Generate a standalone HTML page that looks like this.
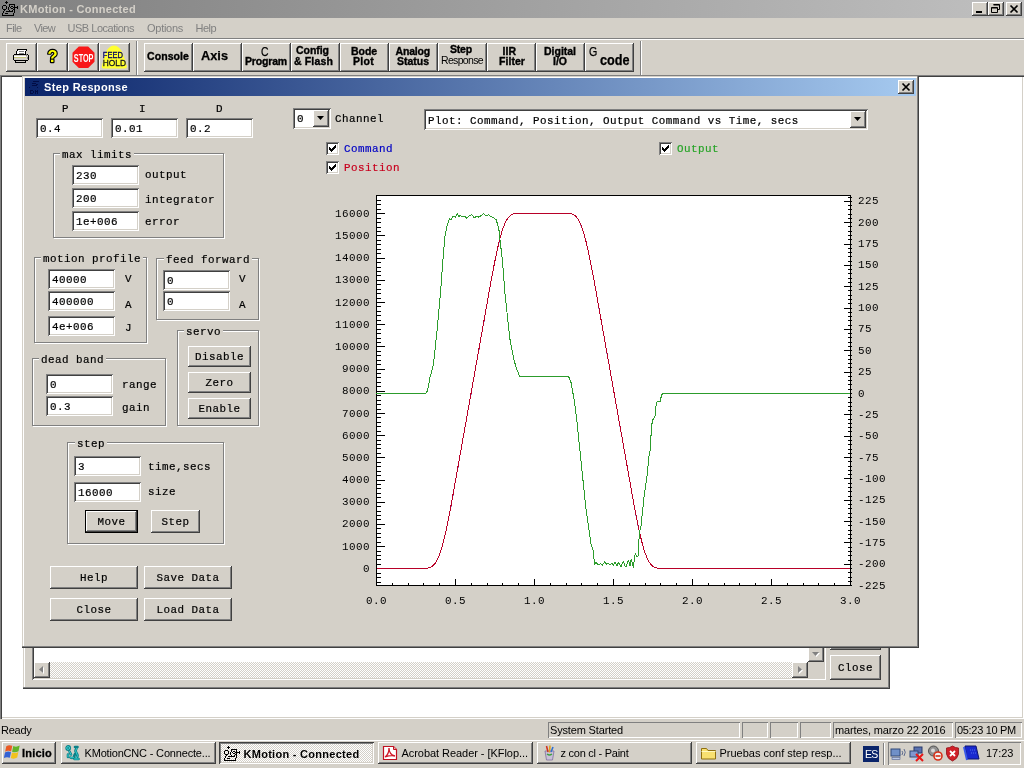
<!DOCTYPE html>
<html><head><meta charset="utf-8"><title>KMotion - Connected</title>
<style>
*{box-sizing:border-box;margin:0;padding:0}
html,body{width:1024px;height:768px;overflow:hidden;background:#d4d0c8}
body{position:relative;font-family:"Liberation Sans",sans-serif;font-size:11px;color:#000}
#r{position:absolute;left:0;top:0;width:1024px;height:768px;overflow:hidden;will-change:transform}
.a{position:absolute}
.m{font-family:"Liberation Mono",monospace;font-size:10.9px;letter-spacing:0.46px;line-height:14px;white-space:pre;color:#000;-webkit-text-stroke:0.2px currentColor}
.s{font-family:"Liberation Sans",sans-serif;font-size:11px;line-height:14px;white-space:pre}
.b{font-weight:bold}
.rb{background:#d4d0c8;box-shadow:inset -1px -1px #404040,inset 1px 1px #fff,inset -2px -2px #808080,inset 2px 2px #d4d0c8}
.sk{background:#fff;box-shadow:inset 1px 1px #808080,inset -1px -1px #fff,inset 2px 2px #404040,inset -2px -2px #d4d0c8}
.gb{border:1px solid #808080;box-shadow:1px 1px #fff,inset 1px 1px #fff}
.gl{background:#d4d0c8;padding:0 2px}
.btn{text-align:center}
.tb{background:#d4d0c8;box-shadow:inset -1px -1px #404040,inset 1px 1px #fff,inset -2px -2px #808080}
.tbt{font-family:"Liberation Sans",sans-serif;font-weight:bold;font-size:11px;line-height:11px;text-align:center;white-space:pre}
.st{box-shadow:inset 1px 1px #808080,inset -1px -1px #fff}
.tk{background:#d4d0c8;box-shadow:inset -1px -1px #404040,inset 1px 1px #fff,inset -2px -2px #808080,inset 2px 2px #d4d0c8}
</style></head>
<body>
<div id="r">
<div class="a " style="left:0px;top:0px;width:1024px;height:18px;background:linear-gradient(90deg,#808080,#c0c0c0)"></div>
<div class="a s" style="left:20px;top:2.2px;font-size:11px;color:#d4d0c8;font-weight:bold;letter-spacing:0.28px;">KMotion - Connected</div>
<svg class="a" style="left:2px;top:1px" width="16" height="16" viewBox="0 0 16 16" shape-rendering="crispEdges"><path d="M4 0h1v1h-1zM3 1h3v1h-3zM4 2h1v1h-1zM7 3h6v1h-6zM1 4h3v1h-3zM7 4h1v1h-1zM12 4h1v1h-1zM0 5h1v1h-1zM4 5h1v1h-1zM7 5h1v1h-1zM9 5h2v1h-2zM12 5h1v1h-1zM15 5h1v1h-1zM0 6h1v1h-1zM4 6h1v1h-1zM6 6h1v1h-1zM8 6h1v1h-1zM11 6h5v1h-5zM0 7h1v1h-1zM4 7h1v1h-1zM6 7h1v1h-1zM9 7h2v1h-2zM12 7h1v1h-1zM15 7h1v1h-1zM1 8h3v1h-3zM6 8h1v1h-1zM11 8h2v1h-2zM2 9h1v1h-1zM7 9h1v1h-1zM10 9h1v1h-1zM12 9h1v1h-1zM1 10h1v1h-1zM4 10h7v1h-7zM12 10h1v1h-1zM1 11h1v1h-1zM12 11h1v1h-1zM0 12h1v1h-1zM3 12h3v1h-3zM11 12h1v1h-1zM0 13h1v1h-1zM11 13h1v1h-1zM0 14h12v1h-12z" fill="#000"/></svg>
<div class="a rb" style="left:972px;top:2px;width:16px;height:14px;"></div>
<div class="a " style="left:976px;top:11px;width:6px;height:2px;background:#000"></div>
<div class="a rb" style="left:988px;top:2px;width:16px;height:14px;"></div>
<svg class="a" style="left:988px;top:2px" width="16" height="14" viewBox="0 0 16 14"><path d="M5.5 2.5h6v5h-2M5.5 3h6M3.5 5.5h6v5h-6zM3.5 6h6" fill="none" stroke="#000" stroke-width="1"/></svg>
<div class="a rb" style="left:1006px;top:2px;width:16px;height:14px;"></div>
<svg class="a" style="left:1006px;top:2px" width="16" height="14" viewBox="0 0 16 14"><path d="M4.5 3.5l7 7M11.5 3.5l-7 7" fill="none" stroke="#000" stroke-width="1.7"/></svg>
<div class="a s" style="left:6px;top:21.2px;font-size:11px;color:#808080;letter-spacing:-0.56px;">File</div>
<div class="a s" style="left:34px;top:21.2px;font-size:11px;color:#808080;letter-spacing:-0.66px;">View</div>
<div class="a s" style="left:67.5px;top:21.2px;font-size:11px;color:#808080;letter-spacing:-0.48px;">USB Locations</div>
<div class="a s" style="left:147px;top:21.2px;font-size:11px;color:#808080;letter-spacing:-0.27px;">Options</div>
<div class="a s" style="left:195.5px;top:21.2px;font-size:11px;color:#808080;letter-spacing:-0.53px;">Help</div>
<div class="a " style="left:0px;top:38px;width:1024px;height:1px;background:#808080"></div>
<div class="a " style="left:0px;top:39px;width:1024px;height:1px;background:#fff"></div>
<div class="a tb" style="left:6px;top:43px;width:31px;height:29px;"></div>
<div class="a tb" style="left:37px;top:43px;width:31px;height:29px;"></div>
<div class="a tb" style="left:68px;top:43px;width:31px;height:29px;"></div>
<div class="a tb" style="left:99px;top:43px;width:31px;height:29px;"></div>
<div class="a " style="left:136px;top:41px;width:1px;height:34px;background:#808080"></div>
<div class="a " style="left:137px;top:41px;width:1px;height:34px;background:#fff"></div>
<div class="a tb" style="left:144px;top:43px;width:49px;height:29px;"></div>
<div class="a tb" style="left:193px;top:43px;width:49px;height:29px;"></div>
<div class="a tb" style="left:242px;top:43px;width:49px;height:29px;"></div>
<div class="a tb" style="left:291px;top:43px;width:49px;height:29px;"></div>
<div class="a tb" style="left:340px;top:43px;width:49px;height:29px;"></div>
<div class="a tb" style="left:389px;top:43px;width:49px;height:29px;"></div>
<div class="a tb" style="left:438px;top:43px;width:49px;height:29px;"></div>
<div class="a tb" style="left:487px;top:43px;width:49px;height:29px;"></div>
<div class="a tb" style="left:536px;top:43px;width:49px;height:29px;"></div>
<div class="a tb" style="left:585px;top:43px;width:49px;height:29px;"></div>
<div class="a " style="left:640px;top:41px;width:1px;height:34px;background:#808080"></div>
<div class="a " style="left:641px;top:41px;width:1px;height:34px;background:#fff"></div>
<div class="a s" style="left:147px;top:49.4px;font-size:10.5px;color:#000;font-weight:bold;letter-spacing:0.08px;-webkit-text-stroke:0.35px #000;">Console</div>
<div class="a s" style="left:201px;top:48.8px;font-size:13.5px;color:#000;font-weight:bold;transform:scaleX(0.947);transform-origin:0 0;-webkit-text-stroke:0.25px #000;">Axis</div>
<div class="a s" style="left:260.5px;top:45.1px;font-size:13.5px;color:#000;transform:scaleX(0.769);transform-origin:0 0;-webkit-text-stroke:0.25px #000;">C</div>
<div class="a s" style="left:245px;top:53.9px;font-size:10.5px;color:#000;font-weight:bold;letter-spacing:-0.17px;-webkit-text-stroke:0.35px #000;">Program</div>
<div class="a s" style="left:296px;top:43.4px;font-size:10.5px;color:#000;font-weight:bold;letter-spacing:-0.04px;-webkit-text-stroke:0.35px #000;">Config</div>
<div class="a s" style="left:294px;top:53.9px;font-size:10.5px;color:#000;font-weight:bold;letter-spacing:0.15px;-webkit-text-stroke:0.35px #000;">&amp; Flash</div>
<div class="a s" style="left:351px;top:43.9px;font-size:10.5px;color:#000;font-weight:bold;letter-spacing:-0.06px;-webkit-text-stroke:0.35px #000;">Bode</div>
<div class="a s" style="left:353px;top:53.9px;font-size:10.5px;color:#000;font-weight:bold;letter-spacing:0.29px;-webkit-text-stroke:0.35px #000;">Plot</div>
<div class="a s" style="left:395.5px;top:43.9px;font-size:10.5px;color:#000;font-weight:bold;letter-spacing:-0.18px;-webkit-text-stroke:0.35px #000;">Analog</div>
<div class="a s" style="left:397px;top:53.9px;font-size:10.5px;color:#000;font-weight:bold;letter-spacing:-0.02px;-webkit-text-stroke:0.35px #000;">Status</div>
<div class="a s" style="left:450px;top:41.9px;font-size:10.5px;color:#000;font-weight:bold;letter-spacing:-0.19px;-webkit-text-stroke:0.35px #000;">Step</div>
<div class="a s" style="left:441px;top:53.4px;font-size:10.5px;color:#000;letter-spacing:-0.66px;">Response</div>
<div class="a s" style="left:502.5px;top:43.9px;font-size:10.5px;color:#000;font-weight:bold;letter-spacing:0.03px;-webkit-text-stroke:0.35px #000;">IIR</div>
<div class="a s" style="left:499px;top:53.9px;font-size:10.5px;color:#000;font-weight:bold;letter-spacing:0.05px;-webkit-text-stroke:0.35px #000;">Filter</div>
<div class="a s" style="left:544px;top:43.9px;font-size:10.5px;color:#000;font-weight:bold;letter-spacing:-0.01px;-webkit-text-stroke:0.35px #000;">Digital</div>
<div class="a s" style="left:553px;top:53.9px;font-size:10.5px;color:#000;font-weight:bold;letter-spacing:-0.00px;-webkit-text-stroke:0.35px #000;">I/O</div>
<div class="a s" style="left:589px;top:45.0px;font-size:13px;color:#000;transform:scaleX(0.821);transform-origin:0 0;-webkit-text-stroke:0.25px #000;">G</div>
<div class="a s" style="left:600px;top:52.6px;font-size:14px;color:#000;font-weight:bold;transform:scaleX(0.903);transform-origin:0 0;-webkit-text-stroke:0.25px #000;">code</div>
<svg class="a" style="left:13px;top:49px" width="17" height="14" viewBox="0 0 17 14" shape-rendering="crispEdges"><path d="M4.5 0.5h9l-1.5 5h-9z" fill="#fff" stroke="#000"/><path d="M6 2.5h5M5.5 4h5" stroke="#808080" fill="none"/><path d="M1.5 5.5h13l1 1.5v3.5l-1 1h-13l-1-1v-3.5z" fill="#d4d0c8" stroke="#000"/><path d="M1 8.5h12" stroke="#c8c880" fill="none"/><path d="M1 7.5h12" stroke="#fff" fill="none"/><path d="M2.5 11.5h10v2h-10z" fill="#d4d0c8" stroke="#000"/><path d="M13 5v2M14.5 8v2" stroke="#808080" fill="none"/></svg>
<svg class="a" style="left:44px;top:45px" width="18" height="22" viewBox="0 0 18 22"><text x="8.5" y="17" text-anchor="middle" font-family="Liberation Sans, sans-serif" font-weight="bold" font-size="16.5" fill="#ffff00" stroke="#000" stroke-width="2.4" paint-order="stroke" stroke-linejoin="round">?</text></svg>
<svg class="a" style="left:72px;top:46px" width="23" height="23" viewBox="0 0 23 23"><path d="M6.8 0.5h9.4l6.3 6.3v8.9l-6.3 6.3h-9.4l-6.3-6.3v-8.9z" fill="#f81818"/><text x="1.8" y="16" textLength="19.6" lengthAdjust="spacingAndGlyphs" font-family="Liberation Sans, sans-serif" font-weight="bold" font-size="11" fill="#fff">STOP</text></svg>
<svg class="a" style="left:100px;top:44px" width="29" height="27" viewBox="0 0 29 27"><path d="M14 1.500C17.500 1.500 20.500 4.500 22 8L25 16L26.800 22.500Q27 24.500 25 24.500H3.500Q1.500 24.500 1.800 22.500L3.500 16L6 8C7.500 4.500 10.500 1.500 14 1.500Z" fill="#ffff30"/><text x="2.8" y="13.7" textLength="20.2" lengthAdjust="spacingAndGlyphs" font-family="Liberation Sans, sans-serif" font-size="9.4" fill="#000060" stroke="#000060" stroke-width="0.3">FEED</text><text x="2.8" y="21.9" textLength="23.2" lengthAdjust="spacingAndGlyphs" font-family="Liberation Sans, sans-serif" font-size="9.4" fill="#101020" stroke="#101020" stroke-width="0.3">HOLD</text></svg>
<div class="a " style="left:0px;top:75px;width:1024px;height:644px;background:#fff;box-shadow:inset 1px 1px #808080,inset 2px 2px #404040,inset -1px -1px #fff,inset -2px -2px #d4d0c8"></div>
<div class="a " style="left:23px;top:560px;width:867px;height:129px;background:#d4d0c8;box-shadow:inset -1px -1px #404040,inset -2px -2px #808080,inset 1px 1px #d4d0c8,inset 2px 2px #fff"></div>
<div class="a sk" style="left:32px;top:580px;width:794px;height:100px;"></div>
<div class="a " style="left:34px;top:662px;width:774px;height:16px;background-image:linear-gradient(45deg,#d4d0c8 25%,transparent 25%,transparent 75%,#d4d0c8 75%),linear-gradient(45deg,#d4d0c8 25%,transparent 25%,transparent 75%,#d4d0c8 75%);background-size:2px 2px;background-position:0 0,1px 1px;background-color:#fff"></div>
<div class="a " style="left:808px;top:600px;width:16px;height:62px;background-image:linear-gradient(45deg,#d4d0c8 25%,transparent 25%,transparent 75%,#d4d0c8 75%),linear-gradient(45deg,#d4d0c8 25%,transparent 25%,transparent 75%,#d4d0c8 75%);background-size:2px 2px;background-position:0 0,1px 1px;background-color:#fff"></div>
<div class="a " style="left:808px;top:662px;width:16px;height:16px;background:#d4d0c8"></div>
<div class="a rb" style="left:34px;top:662px;width:16px;height:16px;"></div>
<svg class="a" style="left:34px;top:662px" width="16" height="16"><path d="M9 4v7l-4-3.500z" fill="#fff" transform="translate(1,1)"/><path d="M9 4v7l-4-3.500z" fill="#808080"/></svg>
<div class="a rb" style="left:792px;top:662px;width:16px;height:16px;"></div>
<svg class="a" style="left:792px;top:662px" width="16" height="16"><path d="M6 4v7l4-3.500z" fill="#fff" transform="translate(1,1)"/><path d="M6 4v7l4-3.500z" fill="#808080"/></svg>
<div class="a rb" style="left:808px;top:646px;width:16px;height:16px;"></div>
<svg class="a" style="left:808px;top:646px" width="16" height="16"><path d="M4 6h7l-3.500 4z" fill="#fff" transform="translate(1,1)"/><path d="M4 6h7l-3.500 4z" fill="#808080"/></svg>
<div class="a rb" style="left:830px;top:626px;width:51px;height:24px;"></div>
<div class="a m btn" style="left:830px;top:632px;width:51px">Send</div>
<div class="a rb" style="left:830px;top:655px;width:51px;height:25px;"></div>
<div class="a m btn" style="left:830px;top:661px;width:51px">Close</div>
<div class="a " style="left:0px;top:719px;width:1024px;height:21px;background:#d4d0c8"></div>
<div class="a s" style="left:1px;top:723.2px;font-size:11px;color:#000;letter-spacing:-0.26px;">Ready</div>
<div class="a st" style="left:548px;top:722px;width:192px;height:16px;"></div>
<div class="a st" style="left:742px;top:722px;width:26px;height:16px;"></div>
<div class="a st" style="left:770px;top:722px;width:28px;height:16px;"></div>
<div class="a st" style="left:800px;top:722px;width:31px;height:16px;"></div>
<div class="a st" style="left:833px;top:722px;width:120px;height:16px;"></div>
<div class="a st" style="left:955px;top:722px;width:67px;height:16px;"></div>
<div class="a s" style="left:550px;top:723.2px;font-size:11px;color:#000;letter-spacing:-0.16px;">System Started</div>
<div class="a s" style="left:835px;top:723.2px;font-size:11px;color:#000;letter-spacing:-0.12px;">martes, marzo 22 2016</div>
<div class="a s" style="left:957px;top:723.2px;font-size:11px;color:#000;letter-spacing:-0.31px;">05:23 10 PM</div>
<div class="a " style="left:0px;top:740px;width:1024px;height:28px;background:#d4d0c8;border-top:1px solid #fff"></div>
<div class="a tk" style="left:2px;top:742px;width:54px;height:22px;"></div>
<div class="a s" style="left:22px;top:746.2px;font-size:11px;color:#000;font-weight:bold;letter-spacing:0.21px;-webkit-text-stroke:0.3px #000;">Inicio</div>
<svg class="a" style="left:4px;top:744px" width="17" height="16" viewBox="0 0 17 16"><path d="M2.300 2.200q2.800-1.800 6-0.400l-1.200 5.600q-3.200-1.400-6 0.400z" fill="#ea5a24"/><path d="M9.300 2.100q3.200 1.400 6.400-0.500l-1.200 5.600q-3.200 1.900-6.400 0.500z" fill="#62b428"/><path d="M1 8.600q2.800-1.800 6-0.400l-1.200 5.600q-3.200-1.400-6 0.400z" fill="#3462d4"/><path d="M8 8.500q3.200 1.400 6.400-0.500l-1.200 5.600q-3.200 1.900-6.400 0.500z" fill="#f2c21c"/></svg>
<div class="a tk" style="left:61px;top:742px;width:155px;height:22px;"></div>
<svg class="a" style="left:65px;top:745px" width="16" height="16" viewBox="0 0 16 16"><g fill="none" stroke="#0c8088" stroke-width="2.600" stroke-linecap="round"><circle cx="3.200" cy="3" r="1.600"/><path d="M4.500 6.500l1.500 3M3 9.500v2.500M5.500 12.500q1.500 1 3 0M10 2l2.500 0M11.500 3.500q-2 2.500 0 4.500q2 2.500 0 5M10 9l-1 2.500M9.500 14h4"/></g><g fill="none" stroke="#38d0d0" stroke-width="1" stroke-linecap="round"><circle cx="3.200" cy="3" r="1.500"/><path d="M4.500 6.500l1.500 3M3 9.500v2.500M5.500 12.500q1.500 1 3 0M11.500 3.500q-2 2.500 0 4.500q2 2.500 0 5M9.500 14h4"/></g></svg>
<div class="a s" style="left:84.5px;top:746.2px;font-size:11px;color:#000;letter-spacing:-0.18px;">KMotionCNC - Connecte...</div>
<div class="a " style="left:219px;top:742px;width:155px;height:22px;box-shadow:inset 1px 1px #404040,inset -1px -1px #fff,inset 2px 2px #808080,inset -2px -2px #d4d0c8;background-image:linear-gradient(45deg,#d4d0c8 25%,transparent 25%,transparent 75%,#d4d0c8 75%),linear-gradient(45deg,#d4d0c8 25%,transparent 25%,transparent 75%,#d4d0c8 75%);background-size:2px 2px;background-position:0 0,1px 1px;background-color:#fff"></div>
<svg class="a" style="left:224px;top:746px" width="16" height="16" viewBox="0 0 16 16" shape-rendering="crispEdges"><path d="M4 0h1v1h-1zM3 1h3v1h-3zM4 2h1v1h-1zM7 3h6v1h-6zM1 4h3v1h-3zM7 4h1v1h-1zM12 4h1v1h-1zM0 5h1v1h-1zM4 5h1v1h-1zM7 5h1v1h-1zM9 5h2v1h-2zM12 5h1v1h-1zM15 5h1v1h-1zM0 6h1v1h-1zM4 6h1v1h-1zM6 6h1v1h-1zM8 6h1v1h-1zM11 6h5v1h-5zM0 7h1v1h-1zM4 7h1v1h-1zM6 7h1v1h-1zM9 7h2v1h-2zM12 7h1v1h-1zM15 7h1v1h-1zM1 8h3v1h-3zM6 8h1v1h-1zM11 8h2v1h-2zM2 9h1v1h-1zM7 9h1v1h-1zM10 9h1v1h-1zM12 9h1v1h-1zM1 10h1v1h-1zM4 10h7v1h-7zM12 10h1v1h-1zM1 11h1v1h-1zM12 11h1v1h-1zM0 12h1v1h-1zM3 12h3v1h-3zM11 12h1v1h-1zM0 13h1v1h-1zM11 13h1v1h-1zM0 14h12v1h-12z" fill="#000"/></svg>
<div class="a s" style="left:243.5px;top:747.2px;font-size:11px;color:#000;font-weight:bold;letter-spacing:0.28px;">KMotion - Connected</div>
<div class="a tk" style="left:378px;top:742px;width:155px;height:22px;"></div>
<svg class="a" style="left:382px;top:745px" width="16" height="16" viewBox="0 0 16 16"><path d="M1.500 1.500h10l3 3v10h-13z" fill="#fff" stroke="#c01020" stroke-width="1.2"/><path d="M11.500 1.500v3h3" fill="#f0b0b0" stroke="#c01020"/><path d="M3 12c3-2 4-6 4-9c0 4 2 7 6 8c-4-1-7 0-10 1z" fill="none" stroke="#d01828" stroke-width="1.3"/></svg>
<div class="a s" style="left:401.5px;top:746.2px;font-size:11px;color:#000;letter-spacing:-0.05px;">Acrobat Reader - [KFlop...</div>
<div class="a tk" style="left:537px;top:742px;width:155px;height:22px;"></div>
<svg class="a" style="left:541px;top:745px" width="16" height="16" viewBox="0 0 16 16"><path d="M4 6h9l-1.500 9h-6z" fill="#c8c0d8" stroke="#8070a0" stroke-width="0.8"/><path d="M5.500 1l1.500 6" stroke="#d03020" stroke-width="1.600"/><path d="M9 0.500l-0.500 7" stroke="#e0a020" stroke-width="1.600"/><path d="M12 2l-2 5" stroke="#3070d0" stroke-width="1.600"/><path d="M6 9q2.500 2 5 0" stroke="#40a040" stroke-width="1.400" fill="none"/></svg>
<div class="a s" style="left:560.5px;top:746.2px;font-size:11px;color:#000;letter-spacing:-0.26px;">z con cl - Paint</div>
<div class="a tk" style="left:696px;top:742px;width:155px;height:22px;"></div>
<svg class="a" style="left:700px;top:745px" width="17" height="16" viewBox="0 0 17 16"><path d="M1.500 3.500h5l1.500 2h7.500v8.500h-14z" fill="#f8e070" stroke="#907010" stroke-width="1"/><path d="M1.500 6.500h14" stroke="#fff8c0" stroke-width="1"/></svg>
<div class="a s" style="left:719.5px;top:746.2px;font-size:11px;color:#000;letter-spacing:-0.01px;">Pruebas conf step resp...</div>
<div class="a " style="left:863px;top:746px;width:16px;height:16px;background:#0a246a"></div>
<div class="a s" style="left:865px;top:747.4px;font-size:10.5px;color:#fff;letter-spacing:-0.75px;">ES</div>
<div class="a " style="left:883px;top:743px;width:1px;height:22px;background:#808080"></div>
<div class="a " style="left:884px;top:743px;width:1px;height:22px;background:#fff"></div>
<div class="a st" style="left:888px;top:742px;width:133px;height:23px;"></div>
<div class="a s" style="left:986px;top:746.2px;font-size:11px;color:#000;letter-spacing:-0.01px;">17:23</div>
<svg class="a" style="left:890px;top:745px" width="92" height="17" viewBox="0 0 92 17"><rect x="1" y="4" width="9" height="7" fill="#7090c8" stroke="#304878" stroke-width="1"/><rect x="2" y="12.500" width="8" height="2" fill="#b8c8e8" stroke="#506090" stroke-width="0.600"/><path d="M12 6q1.500 1.500 0 4M14 4q2.500 3 0 7" fill="none" stroke="#506088" stroke-width="0.900"/><rect x="24" y="2" width="8" height="6" fill="#5870b0" stroke="#283868"/><rect x="20" y="6" width="8" height="6" fill="#8098d0" stroke="#304878"/><rect x="21" y="13" width="7" height="2" fill="#b8c8e8"/><path d="M26 9l7 7M33 9l-7 7" stroke="#e81818" stroke-width="2"/><circle cx="43.500" cy="6" r="5" fill="#909090" stroke="#505050"/><circle cx="43" cy="5.500" r="2" fill="#d8d8d8"/><circle cx="48" cy="11" r="4" fill="#f0f0f0" stroke="#d83018" stroke-width="1.600"/><path d="M45.500 11h5" stroke="#d83018" stroke-width="1.600"/><path d="M62.500 1q3 2 6 2v6q-1 5-6 7q-5-2-6-7v-6q3 0 6-2z" fill="#d02028" stroke="#901018" stroke-width="0.800"/><path d="M60 6l5 5M65 6l-5 5" stroke="#fff" stroke-width="1.800"/><path d="M75 1h11l3 13h-12z" fill="#1828d0" stroke="#0c1470"/><path d="M74 2l3 13" stroke="#3858e8" stroke-width="2"/><path d="M80 5h5M81 8h5" stroke="#6080f0" stroke-width="0.800" stroke-dasharray="1 1"/></svg>
<div class="a " style="left:22px;top:76px;width:897px;height:572px;background:#d4d0c8;box-shadow:inset -1px -1px #404040,inset -2px -2px #808080,inset 1px 1px #d4d0c8,inset 2px 2px #fff"></div>
<div class="a " style="left:25px;top:78px;width:891px;height:18px;background:linear-gradient(90deg,#0a246a,#a6caf0)"></div>
<div class="a s" style="left:44px;top:80.2px;font-size:11px;color:#fff;font-weight:bold;letter-spacing:0.35px;">Step Response</div>
<div class="a rb" style="left:898px;top:80px;width:16px;height:14px;"></div>
<svg class="a" style="left:898px;top:80px" width="16" height="14" viewBox="0 0 16 14"><path d="M4.5 3.5l7 7M11.5 3.5l-7 7" fill="none" stroke="#000" stroke-width="1.7"/></svg>
<svg class="a" style="left:27px;top:79px" width="16" height="16" viewBox="0 0 16 16" shape-rendering="crispEdges"><path d="M6 2h6v1h-6zM5 4h4v1h-4zM9 5h2v1h-2zM5 6h5v1h-5zM2 8h1v1h-1zM10 8h1v1h-1zM3 11h1v4h-1zM4 11h2v1h-2zM6 12h1v2h-1zM4 14h2v1h-2zM8 11h1v4h-1zM9 12h1v1h-1zM10 11h1v4h-1z" fill="#00093e" opacity="0.85"/></svg>
<div class="a m" style="left:62px;top:102px;">P</div>
<div class="a m" style="left:139px;top:102px;">I</div>
<div class="a m" style="left:216px;top:102px;">D</div>
<div class="a sk" style="left:36px;top:118px;width:67px;height:20px;"></div>
<div class="a m" style="left:40px;top:122px;">0.4</div>
<div class="a sk" style="left:111px;top:118px;width:67px;height:20px;"></div>
<div class="a m" style="left:115px;top:122px;">0.01</div>
<div class="a sk" style="left:186px;top:118px;width:67px;height:20px;"></div>
<div class="a m" style="left:190px;top:122px;">0.2</div>
<div class="a gb" style="left:53px;top:153px;width:171px;height:85px;"></div>
<div class="a m gl" style="left:60px;top:148px">max limits</div>
<div class="a sk" style="left:72px;top:165px;width:67px;height:20px;"></div>
<div class="a m" style="left:76px;top:169px;">230</div>
<div class="a sk" style="left:72px;top:188px;width:67px;height:20px;"></div>
<div class="a m" style="left:76px;top:192px;">200</div>
<div class="a sk" style="left:72px;top:211px;width:67px;height:20px;"></div>
<div class="a m" style="left:76px;top:215px;">1e+006</div>
<div class="a m" style="left:145px;top:168px;">output</div>
<div class="a m" style="left:145px;top:193px;">integrator</div>
<div class="a m" style="left:145px;top:215px;">error</div>
<div class="a gb" style="left:34px;top:257px;width:113px;height:86px;"></div>
<div class="a m gl" style="left:41px;top:252px">motion profile</div>
<div class="a sk" style="left:48px;top:269px;width:67px;height:20px;"></div>
<div class="a m" style="left:52px;top:273px;">40000</div>
<div class="a sk" style="left:48px;top:291px;width:67px;height:20px;"></div>
<div class="a m" style="left:52px;top:295px;">400000</div>
<div class="a sk" style="left:48px;top:316px;width:67px;height:20px;"></div>
<div class="a m" style="left:52px;top:320px;">4e+006</div>
<div class="a m" style="left:125px;top:272px;">V</div>
<div class="a m" style="left:125px;top:298px;">A</div>
<div class="a m" style="left:125px;top:321px;">J</div>
<div class="a gb" style="left:156px;top:258px;width:103px;height:62px;"></div>
<div class="a m gl" style="left:164px;top:253px">feed forward</div>
<div class="a sk" style="left:163px;top:270px;width:67px;height:20px;"></div>
<div class="a m" style="left:167px;top:274px;">0</div>
<div class="a sk" style="left:163px;top:291px;width:67px;height:20px;"></div>
<div class="a m" style="left:167px;top:295px;">0</div>
<div class="a m" style="left:239px;top:272px;">V</div>
<div class="a m" style="left:239px;top:298px;">A</div>
<div class="a gb" style="left:177px;top:330px;width:82px;height:96px;"></div>
<div class="a m gl" style="left:184px;top:325px">servo</div>
<div class="a rb" style="left:188px;top:346px;width:63px;height:21px;"></div>
<div class="a m btn" style="left:188px;top:350px;width:63px">Disable</div>
<div class="a rb" style="left:188px;top:372px;width:63px;height:21px;"></div>
<div class="a m btn" style="left:188px;top:376px;width:63px">Zero</div>
<div class="a rb" style="left:188px;top:398px;width:63px;height:21px;"></div>
<div class="a m btn" style="left:188px;top:402px;width:63px">Enable</div>
<div class="a gb" style="left:32px;top:358px;width:134px;height:68px;"></div>
<div class="a m gl" style="left:39px;top:353px">dead band</div>
<div class="a sk" style="left:46px;top:374px;width:67px;height:20px;"></div>
<div class="a m" style="left:50px;top:378px;">0</div>
<div class="a sk" style="left:46px;top:396px;width:67px;height:20px;"></div>
<div class="a m" style="left:50px;top:400px;">0.3</div>
<div class="a m" style="left:122px;top:378px;">range</div>
<div class="a m" style="left:122px;top:401px;">gain</div>
<div class="a gb" style="left:67px;top:442px;width:157px;height:102px;"></div>
<div class="a m gl" style="left:75px;top:437px">step</div>
<div class="a sk" style="left:74px;top:456px;width:67px;height:20px;"></div>
<div class="a m" style="left:78px;top:460px;">3</div>
<div class="a sk" style="left:74px;top:482px;width:67px;height:20px;"></div>
<div class="a m" style="left:78px;top:486px;">16000</div>
<div class="a m" style="left:148px;top:460px;">time,secs</div>
<div class="a m" style="left:148px;top:485px;">size</div>
<div class="a " style="left:85px;top:510px;width:53px;height:23px;background:#000"></div>
<div class="a rb" style="left:86px;top:511px;width:51px;height:21px;"></div>
<div class="a m btn" style="left:85px;top:515px;width:53px">Move</div>
<div class="a rb" style="left:151px;top:510px;width:49px;height:23px;"></div>
<div class="a m btn" style="left:151px;top:515px;width:49px">Step</div>
<div class="a rb" style="left:50px;top:566px;width:88px;height:23px;"></div>
<div class="a m btn" style="left:50px;top:571px;width:88px">Help</div>
<div class="a rb" style="left:144px;top:566px;width:88px;height:23px;"></div>
<div class="a m btn" style="left:144px;top:571px;width:88px">Save Data</div>
<div class="a rb" style="left:50px;top:598px;width:88px;height:23px;"></div>
<div class="a m btn" style="left:50px;top:603px;width:88px">Close</div>
<div class="a rb" style="left:144px;top:598px;width:88px;height:23px;"></div>
<div class="a m btn" style="left:144px;top:603px;width:88px">Load Data</div>
<div class="a sk" style="left:293px;top:108px;width:38px;height:21px;"></div>
<div class="a m" style="left:297px;top:112px;">0</div>
<div class="a rb" style="left:313px;top:110px;width:16px;height:17px;"></div>
<svg class="a" style="left:317px;top:116px" width="7" height="4"><path d="M0 0h7l-3.5 4z" fill="#000"/></svg>
<div class="a m" style="left:335px;top:112px;">Channel</div>
<div class="a sk" style="left:424px;top:109px;width:444px;height:21px;"></div>
<div class="a m" style="left:428px;top:114px;">Plot: Command, Position, Output Command vs Time, secs</div>
<div class="a rb" style="left:850px;top:111px;width:16px;height:17px;"></div>
<svg class="a" style="left:854px;top:117px" width="7" height="4"><path d="M0 0h7l-3.5 4z" fill="#000"/></svg>
<div class="a sk" style="left:326px;top:142px;width:13px;height:13px;"></div>
<svg class="a" style="left:329px;top:145px" width="7" height="7" shape-rendering="crispEdges"><path d="M6 0h1v1h-1zM5 1h2v1h-2zM0 2h1v1h-1zM4 2h3v1h-3zM0 3h2v1h-2zM3 3h3v1h-3zM0 4h5v1h-5zM1 5h3v1h-3zM2 6h1v1h-1z" fill="#000"/></svg>
<div class="a m" style="left:344px;top:142px;color:#0000c4">Command</div>
<div class="a sk" style="left:326px;top:161px;width:13px;height:13px;"></div>
<svg class="a" style="left:329px;top:164px" width="7" height="7" shape-rendering="crispEdges"><path d="M6 0h1v1h-1zM5 1h2v1h-2zM0 2h1v1h-1zM4 2h3v1h-3zM0 3h2v1h-2zM3 3h3v1h-3zM0 4h5v1h-5zM1 5h3v1h-3zM2 6h1v1h-1z" fill="#000"/></svg>
<div class="a m" style="left:344px;top:161px;color:#c8001e">Position</div>
<div class="a sk" style="left:659px;top:142px;width:13px;height:13px;"></div>
<svg class="a" style="left:662px;top:145px" width="7" height="7" shape-rendering="crispEdges"><path d="M6 0h1v1h-1zM5 1h2v1h-2zM0 2h1v1h-1zM4 2h3v1h-3zM0 3h2v1h-2zM3 3h3v1h-3zM0 4h5v1h-5zM1 5h3v1h-3zM2 6h1v1h-1z" fill="#000"/></svg>
<div class="a m" style="left:677px;top:142px;color:#28a428">Output</div>
<svg class="a" style="left:0;top:0" width="1024" height="768" viewBox="0 0 1024 768">
<rect x="376" y="195" width="475" height="391" fill="#fff"/>
<path d="M376 195.5H851M376 585.5H851M376.5 195V586M850.5 195V586M376 582.5h5M376 577.5h5M376 573.5h5M376 568.5h9M376 564.5h5M376 559.5h5M376 555.5h5M376 551.5h5M376 546.5h9M376 542.5h5M376 537.5h5M376 533.5h5M376 528.5h5M376 524.5h9M376 519.5h5M376 515.5h5M376 511.5h5M376 506.5h5M376 502.5h9M376 497.5h5M376 493.5h5M376 488.5h5M376 484.5h5M376 480.5h9M376 475.5h5M376 471.5h5M376 466.5h5M376 462.5h5M376 457.5h9M376 453.5h5M376 448.5h5M376 444.5h5M376 440.5h5M376 435.5h9M376 431.5h5M376 426.5h5M376 422.5h5M376 417.5h5M376 413.5h9M376 409.5h5M376 404.5h5M376 400.5h5M376 395.5h5M376 391.5h9M376 386.5h5M376 382.5h5M376 377.5h5M376 373.5h5M376 369.5h9M376 364.5h5M376 360.5h5M376 355.5h5M376 351.5h5M376 346.5h9M376 342.5h5M376 338.5h5M376 333.5h5M376 329.5h5M376 324.5h9M376 320.5h5M376 315.5h5M376 311.5h5M376 306.5h5M376 302.5h9M376 298.5h5M376 293.5h5M376 289.5h5M376 284.5h5M376 280.5h9M376 275.5h5M376 271.5h5M376 267.5h5M376 262.5h5M376 258.5h9M376 253.5h5M376 249.5h5M376 244.5h5M376 240.5h5M376 235.5h9M376 231.5h5M376 227.5h5M376 222.5h5M376 218.5h5M376 213.5h9M376 209.5h5M376 204.5h5M376 200.5h5M852 585.5h-8M852 581.5h-4M852 577.5h-4M852 572.5h-4M852 568.5h-4M852 564.5h-8M852 560.5h-4M852 555.5h-4M852 551.5h-4M852 547.5h-4M852 542.5h-8M852 538.5h-4M852 534.5h-4M852 530.5h-4M852 525.5h-4M852 521.5h-8M852 517.5h-4M852 513.5h-4M852 508.5h-4M852 504.5h-4M852 500.5h-8M852 496.5h-4M852 491.5h-4M852 487.5h-4M852 483.5h-4M852 478.5h-8M852 474.5h-4M852 470.5h-4M852 466.5h-4M852 461.5h-4M852 457.5h-8M852 453.5h-4M852 449.5h-4M852 444.5h-4M852 440.5h-4M852 436.5h-8M852 431.5h-4M852 427.5h-4M852 423.5h-4M852 419.5h-4M852 414.5h-8M852 410.5h-4M852 406.5h-4M852 402.5h-4M852 397.5h-4M852 393.5h-8M852 389.5h-4M852 384.5h-4M852 380.5h-4M852 376.5h-4M852 372.5h-8M852 367.5h-4M852 363.5h-4M852 359.5h-4M852 355.5h-4M852 350.5h-8M852 346.5h-4M852 342.5h-4M852 337.5h-4M852 333.5h-4M852 329.5h-8M852 325.5h-4M852 320.5h-4M852 316.5h-4M852 312.5h-4M852 308.5h-8M852 303.5h-4M852 299.5h-4M852 295.5h-4M852 290.5h-4M852 286.5h-8M852 282.5h-4M852 278.5h-4M852 273.5h-4M852 269.5h-4M852 265.5h-8M852 261.5h-4M852 256.5h-4M852 252.5h-4M852 248.5h-4M852 244.5h-8M852 239.5h-4M852 235.5h-4M852 231.5h-4M852 226.5h-4M852 222.5h-8M852 218.5h-4M852 214.5h-4M852 209.5h-4M852 205.5h-4M852 201.5h-8M852 197.5h-4M376.5 586v-7M392.5 586v-3M408.5 586v-3M423.5 586v-3M439.5 586v-3M455.5 586v-7M471.5 586v-3M487.5 586v-3M502.5 586v-3M518.5 586v-3M534.5 586v-7M550.5 586v-3M566.5 586v-3M581.5 586v-3M597.5 586v-3M613.5 586v-7M629.5 586v-3M645.5 586v-3M660.5 586v-3M676.5 586v-3M692.5 586v-7M708.5 586v-3M724.5 586v-3M739.5 586v-3M755.5 586v-3M771.5 586v-7M787.5 586v-3M803.5 586v-3M818.5 586v-3M834.5 586v-3M850.5 586v-7" fill="none" stroke="#000" stroke-width="1" shape-rendering="crispEdges"/>
<path d="M376.7 568.3 377.2 568.3 377.7 568.3 378.2 568.3 378.7 568.3 379.2 568.3 379.7 568.3 380.2 568.3 380.7 568.3 381.2 568.3 381.7 568.3 382.2 568.3 382.7 568.3 383.2 568.3 383.7 568.3 384.2 568.3 384.7 568.3 385.2 568.3 385.7 568.3 386.2 568.3 386.7 568.3 387.2 568.3 387.7 568.3 388.2 568.3 388.7 568.3 389.2 568.3 389.7 568.3 390.2 568.3 390.7 568.3 391.2 568.3 391.7 568.3 392.2 568.3 392.7 568.3 393.2 568.3 393.7 568.3 394.2 568.3 394.7 568.3 395.2 568.3 395.7 568.3 396.2 568.3 396.7 568.3 397.2 568.3 397.7 568.3 398.2 568.3 398.7 568.3 399.2 568.3 399.7 568.3 400.2 568.3 400.7 568.3 401.2 568.3 401.7 568.3 402.2 568.3 402.7 568.3 403.2 568.3 403.7 568.3 404.2 568.3 404.7 568.3 405.2 568.3 405.7 568.3 406.2 568.3 406.7 568.3 407.2 568.3 407.7 568.3 408.2 568.3 408.7 568.3 409.2 568.3 409.7 568.3 410.2 568.3 410.7 568.3 411.2 568.3 411.7 568.3 412.2 568.3 412.7 568.3 413.2 568.3 413.7 568.3 414.2 568.3 414.7 568.3 415.2 568.3 415.7 568.3 416.2 568.3 416.7 568.3 417.2 568.3 417.7 568.3 418.2 568.3 418.7 568.3 419.2 568.3 419.7 568.3 420.2 568.3 420.7 568.3 421.2 568.3 421.7 568.3 422.2 568.3 422.7 568.3 423.2 568.3 423.7 568.3 424.2 568.3 424.7 568.3 425.2 568.3 425.7 568.3 426.2 568.3 426.7 568.2 427.2 568.2 427.7 568.1 428.2 568.0 428.7 567.9 429.2 567.8 429.7 567.6 430.2 567.4 430.7 567.2 431.2 567.0 431.7 566.7 432.2 566.3 432.7 565.9 433.2 565.5 433.7 565.0 434.2 564.4 434.7 563.8 435.2 563.2 435.7 562.4 436.2 561.7 436.7 560.8 437.2 559.9 437.7 558.9 438.2 557.8 438.7 556.6 439.2 555.4 439.7 554.1 440.2 552.6 440.7 551.1 441.2 549.6 441.7 547.9 442.2 546.1 442.7 544.3 443.2 542.4 443.7 540.5 444.2 538.4 444.7 536.3 445.2 534.2 445.7 532.0 446.2 529.7 446.7 527.4 447.2 525.0 447.7 522.6 448.2 520.1 448.7 517.6 449.2 515.0 449.7 512.4 450.2 509.8 450.7 507.2 451.2 504.5 451.7 501.8 452.2 499.0 452.7 496.3 453.2 493.5 453.7 490.7 454.2 488.0 454.7 485.2 455.2 482.4 455.7 479.5 456.2 476.7 456.7 473.9 457.2 471.1 457.7 468.3 458.2 465.5 458.7 462.7 459.2 459.9 459.7 457.1 460.2 454.3 460.7 451.5 461.2 448.7 461.7 445.8 462.2 443.0 462.7 440.2 463.2 437.4 463.7 434.6 464.2 431.8 464.7 429.0 465.2 426.2 465.7 423.4 466.2 420.6 466.7 417.8 467.2 415.0 467.7 412.1 468.2 409.3 468.7 406.5 469.2 403.7 469.7 400.9 470.2 398.1 470.7 395.3 471.2 392.5 471.7 389.7 472.2 386.9 472.7 384.1 473.2 381.3 473.7 378.4 474.2 375.6 474.7 372.8 475.2 370.0 475.7 367.2 476.2 364.4 476.7 361.6 477.2 358.8 477.7 356.0 478.2 353.2 478.7 350.4 479.2 347.5 479.7 344.7 480.2 341.9 480.7 339.1 481.2 336.3 481.7 333.5 482.2 330.7 482.7 327.9 483.2 325.1 483.7 322.3 484.2 319.5 484.7 316.7 485.2 313.8 485.7 311.0 486.2 308.2 486.7 305.4 487.2 302.6 487.7 299.8 488.2 297.0 488.7 294.2 489.2 291.4 489.7 288.6 490.2 285.9 490.7 283.1 491.2 280.4 491.7 277.7 492.2 275.0 492.7 272.3 493.2 269.7 493.7 267.1 494.2 264.5 494.7 262.0 495.2 259.5 495.7 257.1 496.2 254.7 496.7 252.4 497.2 250.1 497.7 247.9 498.2 245.7 498.7 243.6 499.2 241.5 499.7 239.6 500.2 237.6 500.7 235.8 501.2 234.1 501.7 232.4 502.2 230.8 502.7 229.3 503.2 227.8 503.7 226.5 504.2 225.2 504.7 224.0 505.2 222.9 505.7 221.9 506.2 221.0 506.7 220.1 507.2 219.3 507.7 218.6 508.2 217.9 508.7 217.3 509.2 216.7 509.7 216.2 510.2 215.8 510.7 215.4 511.2 215.0 511.7 214.7 512.2 214.4 512.7 214.2 513.2 214.0 513.7 213.8 514.2 213.7 514.7 213.6 515.2 213.5 515.7 213.4 516.2 213.4 516.7 213.3 517.2 213.3 517.7 213.3 518.2 213.3 518.7 213.3 519.2 213.3 519.7 213.3 520.2 213.3 520.7 213.3 521.2 213.3 521.7 213.3 522.2 213.3 522.7 213.3 523.2 213.3 523.7 213.3 524.2 213.3 524.7 213.3 525.2 213.3 525.7 213.3 526.2 213.3 526.7 213.3 527.2 213.3 527.7 213.3 528.2 213.3 528.7 213.3 529.2 213.3 529.7 213.3 530.2 213.3 530.7 213.3 531.2 213.3 531.7 213.3 532.2 213.3 532.7 213.3 533.2 213.3 533.7 213.3 534.2 213.3 534.7 213.3 535.2 213.3 535.7 213.3 536.2 213.3 536.7 213.3 537.2 213.3 537.7 213.3 538.2 213.3 538.7 213.3 539.2 213.3 539.7 213.3 540.2 213.3 540.7 213.3 541.2 213.3 541.7 213.3 542.2 213.3 542.7 213.3 543.2 213.3 543.7 213.3 544.2 213.3 544.7 213.3 545.2 213.3 545.7 213.3 546.2 213.3 546.7 213.3 547.2 213.3 547.7 213.3 548.2 213.3 548.7 213.3 549.2 213.3 549.7 213.3 550.2 213.3 550.7 213.3 551.2 213.3 551.7 213.3 552.2 213.3 552.7 213.3 553.2 213.3 553.7 213.3 554.2 213.3 554.7 213.3 555.2 213.3 555.7 213.3 556.2 213.3 556.7 213.3 557.2 213.3 557.7 213.3 558.2 213.3 558.7 213.3 559.2 213.3 559.7 213.3 560.2 213.3 560.7 213.3 561.2 213.3 561.7 213.3 562.2 213.3 562.7 213.3 563.2 213.3 563.7 213.3 564.2 213.3 564.7 213.3 565.2 213.3 565.7 213.3 566.2 213.3 566.7 213.3 567.2 213.3 567.7 213.3 568.2 213.3 568.7 213.4 569.2 213.4 569.7 213.4 570.2 213.5 570.7 213.6 571.2 213.7 571.7 213.9 572.2 214.1 572.7 214.3 573.2 214.5 573.7 214.8 574.2 215.1 574.7 215.5 575.2 215.9 575.7 216.4 576.2 216.9 576.7 217.5 577.2 218.2 577.7 218.9 578.2 219.6 578.7 220.5 579.2 221.4 579.7 222.3 580.2 223.4 580.7 224.5 581.2 225.7 581.7 227.0 582.2 228.4 582.7 229.8 583.2 231.4 583.7 233.0 584.2 234.7 584.7 236.5 585.2 238.4 585.7 240.3 586.2 242.3 586.7 244.4 587.2 246.5 587.7 248.7 588.2 251.0 588.7 253.3 589.2 255.7 589.7 258.1 590.2 260.5 590.7 263.0 591.2 265.6 591.7 268.1 592.2 270.7 592.7 273.4 593.2 276.0 593.7 278.7 594.2 281.5 594.7 284.2 595.2 287.0 595.7 289.7 596.2 292.5 596.7 295.3 597.2 298.1 597.7 300.9 598.2 303.7 598.7 306.5 599.2 309.4 599.7 312.2 600.2 315.0 600.7 317.8 601.2 320.6 601.7 323.4 602.2 326.2 602.7 329.0 603.2 331.8 603.7 334.6 604.2 337.4 604.7 340.2 605.2 343.1 605.7 345.9 606.2 348.7 606.7 351.5 607.2 354.3 607.7 357.1 608.2 359.9 608.7 362.7 609.2 365.5 609.7 368.3 610.2 371.1 610.7 373.9 611.2 376.8 611.7 379.6 612.2 382.4 612.7 385.2 613.2 388.0 613.7 390.8 614.2 393.6 614.7 396.4 615.2 399.2 615.7 402.0 616.2 404.8 616.7 407.7 617.2 410.5 617.7 413.3 618.2 416.1 618.7 418.9 619.2 421.7 619.7 424.5 620.2 427.3 620.7 430.1 621.2 432.9 621.7 435.7 622.2 438.5 622.7 441.4 623.2 444.2 623.7 447.0 624.2 449.8 624.7 452.6 625.2 455.4 625.7 458.2 626.2 461.0 626.7 463.8 627.2 466.6 627.7 469.4 628.2 472.2 628.7 475.1 629.2 477.9 629.7 480.7 630.2 483.5 630.7 486.3 631.2 489.1 631.7 491.9 632.2 494.6 632.7 497.4 633.2 500.1 633.7 502.9 634.2 505.6 634.7 508.2 635.2 510.9 635.7 513.5 636.2 516.0 636.7 518.6 637.2 521.1 637.7 523.5 638.2 525.9 638.7 528.3 639.2 530.6 639.7 532.9 640.2 535.1 640.7 537.2 641.2 539.3 641.7 541.3 642.2 543.2 642.7 545.1 643.2 546.9 643.7 548.6 644.2 550.2 644.7 551.8 645.2 553.2 645.7 554.6 646.2 555.9 646.7 557.1 647.2 558.2 647.7 559.3 648.2 560.2 648.7 561.1 649.2 562.0 649.7 562.7 650.2 563.4 650.7 564.1 651.2 564.7 651.7 565.2 652.2 565.7 652.7 566.1 653.2 566.5 653.7 566.8 654.2 567.1 654.7 567.3 655.2 567.5 655.7 567.7 656.2 567.9 656.7 568.0 657.2 568.1 657.7 568.2 658.2 568.2 658.7 568.2 659.2 568.3 659.7 568.3 660.2 568.3 660.7 568.3 661.2 568.3 661.7 568.3 662.2 568.3 662.7 568.3 663.2 568.3 663.7 568.3 664.2 568.3 664.7 568.3 665.2 568.3 665.7 568.3 666.2 568.3 666.7 568.3 667.2 568.3 667.7 568.3 668.2 568.3 668.7 568.3 669.2 568.3 669.7 568.3 670.2 568.3 670.7 568.3 671.2 568.3 671.7 568.3 672.2 568.3 672.7 568.3 673.2 568.3 673.7 568.3 674.2 568.3 674.7 568.3 675.2 568.3 675.7 568.3 676.2 568.3 676.7 568.3 677.2 568.3 677.7 568.3 678.2 568.3 678.7 568.3 679.2 568.3 679.7 568.3 680.2 568.3 680.7 568.3 681.2 568.3 681.7 568.3 682.2 568.3 682.7 568.3 683.2 568.3 683.7 568.3 684.2 568.3 684.7 568.3 685.2 568.3 685.7 568.3 686.2 568.3 686.7 568.3 687.2 568.3 687.7 568.3 688.2 568.3 688.7 568.3 689.2 568.3 689.7 568.3 690.2 568.3 690.7 568.3 691.2 568.3 691.7 568.3 692.2 568.3 692.7 568.3 693.2 568.3 693.7 568.3 694.2 568.3 694.7 568.3 695.2 568.3 695.7 568.3 696.2 568.3 696.7 568.3 697.2 568.3 697.7 568.3 698.2 568.3 698.7 568.3 699.2 568.3 699.7 568.3 700.2 568.3 700.7 568.3 701.2 568.3 701.7 568.3 702.2 568.3 702.7 568.3 703.2 568.3 703.7 568.3 704.2 568.3 704.7 568.3 705.2 568.3 705.7 568.3 706.2 568.3 706.7 568.3 707.2 568.3 707.7 568.3 708.2 568.3 708.7 568.3 709.2 568.3 709.7 568.3 710.2 568.3 710.7 568.3 711.2 568.3 711.7 568.3 712.2 568.3 712.7 568.3 713.2 568.3 713.7 568.3 714.2 568.3 714.7 568.3 715.2 568.3 715.7 568.3 716.2 568.3 716.7 568.3 717.2 568.3 717.7 568.3 718.2 568.3 718.7 568.3 719.2 568.3 719.7 568.3 720.2 568.3 720.7 568.3 721.2 568.3 721.7 568.3 722.2 568.3 722.7 568.3 723.2 568.3 723.7 568.3 724.2 568.3 724.7 568.3 725.2 568.3 725.7 568.3 726.2 568.3 726.7 568.3 727.2 568.3 727.7 568.3 728.2 568.3 728.7 568.3 729.2 568.3 729.7 568.3 730.2 568.3 730.7 568.3 731.2 568.3 731.7 568.3 732.2 568.3 732.7 568.3 733.2 568.3 733.7 568.3 734.2 568.3 734.7 568.3 735.2 568.3 735.7 568.3 736.2 568.3 736.7 568.3 737.2 568.3 737.7 568.3 738.2 568.3 738.7 568.3 739.2 568.3 739.7 568.3 740.2 568.3 740.7 568.3 741.2 568.3 741.7 568.3 742.2 568.3 742.7 568.3 743.2 568.3 743.7 568.3 744.2 568.3 744.7 568.3 745.2 568.3 745.7 568.3 746.2 568.3 746.7 568.3 747.2 568.3 747.7 568.3 748.2 568.3 748.7 568.3 749.2 568.3 749.7 568.3 750.2 568.3 750.7 568.3 751.2 568.3 751.7 568.3 752.2 568.3 752.7 568.3 753.2 568.3 753.7 568.3 754.2 568.3 754.7 568.3 755.2 568.3 755.7 568.3 756.2 568.3 756.7 568.3 757.2 568.3 757.7 568.3 758.2 568.3 758.7 568.3 759.2 568.3 759.7 568.3 760.2 568.3 760.7 568.3 761.2 568.3 761.7 568.3 762.2 568.3 762.7 568.3 763.2 568.3 763.7 568.3 764.2 568.3 764.7 568.3 765.2 568.3 765.7 568.3 766.2 568.3 766.7 568.3 767.2 568.3 767.7 568.3 768.2 568.3 768.7 568.3 769.2 568.3 769.7 568.3 770.2 568.3 770.7 568.3 771.2 568.3 771.7 568.3 772.2 568.3 772.7 568.3 773.2 568.3 773.7 568.3 774.2 568.3 774.7 568.3 775.2 568.3 775.7 568.3 776.2 568.3 776.7 568.3 777.2 568.3 777.7 568.3 778.2 568.3 778.7 568.3 779.2 568.3 779.7 568.3 780.2 568.3 780.7 568.3 781.2 568.3 781.7 568.3 782.2 568.3 782.7 568.3 783.2 568.3 783.7 568.3 784.2 568.3 784.7 568.3 785.2 568.3 785.7 568.3 786.2 568.3 786.7 568.3 787.2 568.3 787.7 568.3 788.2 568.3 788.7 568.3 789.2 568.3 789.7 568.3 790.2 568.3 790.7 568.3 791.2 568.3 791.7 568.3 792.2 568.3 792.7 568.3 793.2 568.3 793.7 568.3 794.2 568.3 794.7 568.3 795.2 568.3 795.7 568.3 796.2 568.3 796.7 568.3 797.2 568.3 797.7 568.3 798.2 568.3 798.7 568.3 799.2 568.3 799.7 568.3 800.2 568.3 800.7 568.3 801.2 568.3 801.7 568.3 802.2 568.3 802.7 568.3 803.2 568.3 803.7 568.3 804.2 568.3 804.7 568.3 805.2 568.3 805.7 568.3 806.2 568.3 806.7 568.3 807.2 568.3 807.7 568.3 808.2 568.3 808.7 568.3 809.2 568.3 809.7 568.3 810.2 568.3 810.7 568.3 811.2 568.3 811.7 568.3 812.2 568.3 812.7 568.3 813.2 568.3 813.7 568.3 814.2 568.3 814.7 568.3 815.2 568.3 815.7 568.3 816.2 568.3 816.7 568.3 817.2 568.3 817.7 568.3 818.2 568.3 818.7 568.3 819.2 568.3 819.7 568.3 820.2 568.3 820.7 568.3 821.2 568.3 821.7 568.3 822.2 568.3 822.7 568.3 823.2 568.3 823.7 568.3 824.2 568.3 824.7 568.3 825.2 568.3 825.7 568.3 826.2 568.3 826.7 568.3 827.2 568.3 827.7 568.3 828.2 568.3 828.7 568.3 829.2 568.3 829.7 568.3 830.2 568.3 830.7 568.3 831.2 568.3 831.7 568.3 832.2 568.3 832.7 568.3 833.2 568.3 833.7 568.3 834.2 568.3 834.7 568.3 835.2 568.3 835.7 568.3 836.2 568.3 836.7 568.3 837.2 568.3 837.7 568.3 838.2 568.3 838.7 568.3 839.2 568.3 839.7 568.3 840.2 568.3 840.7 568.3 841.2 568.3 841.7 568.3 842.2 568.3 842.7 568.3 843.2 568.3 843.7 568.3 844.2 568.3 844.7 568.3 845.2 568.3 845.7 568.3 846.2 568.3 846.7 568.3 847.2 568.3 847.7 568.3 848.2 568.3 848.7 568.3 849.2 568.3 849.7 568.3 850.0 568.3 850.0 568.3" fill="none" stroke="#2020a0" stroke-width="0.5" shape-rendering="crispEdges"/>
<path d="M376.7 568.3 377.2 568.3 377.7 568.3 378.2 568.3 378.7 568.3 379.2 568.3 379.7 568.3 380.2 568.3 380.7 568.3 381.2 568.3 381.7 568.3 382.2 568.3 382.7 568.3 383.2 568.3 383.7 568.3 384.2 568.3 384.7 568.3 385.2 568.3 385.7 568.3 386.2 568.3 386.7 568.3 387.2 568.3 387.7 568.3 388.2 568.3 388.7 568.3 389.2 568.3 389.7 568.3 390.2 568.3 390.7 568.3 391.2 568.3 391.7 568.3 392.2 568.3 392.7 568.3 393.2 568.3 393.7 568.3 394.2 568.3 394.7 568.3 395.2 568.3 395.7 568.3 396.2 568.3 396.7 568.3 397.2 568.3 397.7 568.3 398.2 568.3 398.7 568.3 399.2 568.3 399.7 568.3 400.2 568.3 400.7 568.3 401.2 568.3 401.7 568.3 402.2 568.3 402.7 568.3 403.2 568.3 403.7 568.3 404.2 568.3 404.7 568.3 405.2 568.3 405.7 568.3 406.2 568.3 406.7 568.3 407.2 568.3 407.7 568.3 408.2 568.3 408.7 568.3 409.2 568.3 409.7 568.3 410.2 568.3 410.7 568.3 411.2 568.3 411.7 568.3 412.2 568.3 412.7 568.3 413.2 568.3 413.7 568.3 414.2 568.3 414.7 568.3 415.2 568.3 415.7 568.3 416.2 568.3 416.7 568.3 417.2 568.3 417.7 568.3 418.2 568.3 418.7 568.3 419.2 568.3 419.7 568.3 420.2 568.3 420.7 568.3 421.2 568.3 421.7 568.3 422.2 568.3 422.7 568.3 423.2 568.3 423.7 568.3 424.2 568.3 424.7 568.3 425.2 568.3 425.7 568.3 426.2 568.3 426.7 568.2 427.2 568.2 427.7 568.1 428.2 568.0 428.7 567.9 429.2 567.8 429.7 567.6 430.2 567.4 430.7 567.2 431.2 567.0 431.7 566.7 432.2 566.3 432.7 565.9 433.2 565.5 433.7 565.0 434.2 564.4 434.7 563.8 435.2 563.2 435.7 562.4 436.2 561.7 436.7 560.8 437.2 559.9 437.7 558.9 438.2 557.8 438.7 556.6 439.2 555.4 439.7 554.1 440.2 552.6 440.7 551.1 441.2 549.6 441.7 547.9 442.2 546.1 442.7 544.3 443.2 542.4 443.7 540.5 444.2 538.4 444.7 536.3 445.2 534.2 445.7 532.0 446.2 529.7 446.7 527.4 447.2 525.0 447.7 522.6 448.2 520.1 448.7 517.6 449.2 515.0 449.7 512.4 450.2 509.8 450.7 507.2 451.2 504.5 451.7 501.8 452.2 499.0 452.7 496.3 453.2 493.5 453.7 490.7 454.2 488.0 454.7 485.2 455.2 482.4 455.7 479.5 456.2 476.7 456.7 473.9 457.2 471.1 457.7 468.3 458.2 465.5 458.7 462.7 459.2 459.9 459.7 457.1 460.2 454.3 460.7 451.5 461.2 448.7 461.7 445.8 462.2 443.0 462.7 440.2 463.2 437.4 463.7 434.6 464.2 431.8 464.7 429.0 465.2 426.2 465.7 423.4 466.2 420.6 466.7 417.8 467.2 415.0 467.7 412.1 468.2 409.3 468.7 406.5 469.2 403.7 469.7 400.9 470.2 398.1 470.7 395.3 471.2 392.5 471.7 389.7 472.2 386.9 472.7 384.1 473.2 381.3 473.7 378.4 474.2 375.6 474.7 372.8 475.2 370.0 475.7 367.2 476.2 364.4 476.7 361.6 477.2 358.8 477.7 356.0 478.2 353.2 478.7 350.4 479.2 347.5 479.7 344.7 480.2 341.9 480.7 339.1 481.2 336.3 481.7 333.5 482.2 330.7 482.7 327.9 483.2 325.1 483.7 322.3 484.2 319.5 484.7 316.7 485.2 313.8 485.7 311.0 486.2 308.2 486.7 305.4 487.2 302.6 487.7 299.8 488.2 297.0 488.7 294.2 489.2 291.4 489.7 288.6 490.2 285.9 490.7 283.1 491.2 280.4 491.7 277.7 492.2 275.0 492.7 272.3 493.2 269.7 493.7 267.1 494.2 264.5 494.7 262.0 495.2 259.5 495.7 257.1 496.2 254.7 496.7 252.4 497.2 250.1 497.7 247.9 498.2 245.7 498.7 243.6 499.2 241.5 499.7 239.6 500.2 237.6 500.7 235.8 501.2 234.1 501.7 232.4 502.2 230.8 502.7 229.3 503.2 227.8 503.7 226.5 504.2 225.2 504.7 224.0 505.2 222.9 505.7 221.9 506.2 221.0 506.7 220.1 507.2 219.3 507.7 218.6 508.2 217.9 508.7 217.3 509.2 216.7 509.7 216.2 510.2 215.8 510.7 215.4 511.2 215.0 511.7 214.7 512.2 214.4 512.7 214.2 513.2 214.0 513.7 213.8 514.2 213.7 514.7 213.6 515.2 213.5 515.7 213.4 516.2 213.4 516.7 213.3 517.2 213.3 517.7 213.3 518.2 213.3 518.7 213.3 519.2 213.3 519.7 213.3 520.2 213.3 520.7 213.3 521.2 213.3 521.7 213.3 522.2 213.3 522.7 213.3 523.2 213.3 523.7 213.3 524.2 213.3 524.7 213.3 525.2 213.3 525.7 213.3 526.2 213.3 526.7 213.3 527.2 213.3 527.7 213.3 528.2 213.3 528.7 213.3 529.2 213.3 529.7 213.3 530.2 213.3 530.7 213.3 531.2 213.3 531.7 213.3 532.2 213.3 532.7 213.3 533.2 213.3 533.7 213.3 534.2 213.3 534.7 213.3 535.2 213.3 535.7 213.3 536.2 213.3 536.7 213.3 537.2 213.3 537.7 213.3 538.2 213.3 538.7 213.3 539.2 213.3 539.7 213.3 540.2 213.3 540.7 213.3 541.2 213.3 541.7 213.3 542.2 213.3 542.7 213.3 543.2 213.3 543.7 213.3 544.2 213.3 544.7 213.3 545.2 213.3 545.7 213.3 546.2 213.3 546.7 213.3 547.2 213.3 547.7 213.3 548.2 213.3 548.7 213.3 549.2 213.3 549.7 213.3 550.2 213.3 550.7 213.3 551.2 213.3 551.7 213.3 552.2 213.3 552.7 213.3 553.2 213.3 553.7 213.3 554.2 213.3 554.7 213.3 555.2 213.3 555.7 213.3 556.2 213.3 556.7 213.3 557.2 213.3 557.7 213.3 558.2 213.3 558.7 213.3 559.2 213.3 559.7 213.3 560.2 213.3 560.7 213.3 561.2 213.3 561.7 213.3 562.2 213.3 562.7 213.3 563.2 213.3 563.7 213.3 564.2 213.3 564.7 213.3 565.2 213.3 565.7 213.3 566.2 213.3 566.7 213.3 567.2 213.3 567.7 213.3 568.2 213.3 568.7 213.4 569.2 213.4 569.7 213.4 570.2 213.5 570.7 213.6 571.2 213.7 571.7 213.9 572.2 214.1 572.7 214.3 573.2 214.5 573.7 214.8 574.2 215.1 574.7 215.5 575.2 215.9 575.7 216.4 576.2 216.9 576.7 217.5 577.2 218.2 577.7 218.9 578.2 219.6 578.7 220.5 579.2 221.4 579.7 222.3 580.2 223.4 580.7 224.5 581.2 225.7 581.7 227.0 582.2 228.4 582.7 229.8 583.2 231.4 583.7 233.0 584.2 234.7 584.7 236.5 585.2 238.4 585.7 240.3 586.2 242.3 586.7 244.4 587.2 246.5 587.7 248.7 588.2 251.0 588.7 253.3 589.2 255.7 589.7 258.1 590.2 260.5 590.7 263.0 591.2 265.6 591.7 268.1 592.2 270.7 592.7 273.4 593.2 276.0 593.7 278.7 594.2 281.5 594.7 284.2 595.2 287.0 595.7 289.7 596.2 292.5 596.7 295.3 597.2 298.1 597.7 300.9 598.2 303.7 598.7 306.5 599.2 309.4 599.7 312.2 600.2 315.0 600.7 317.8 601.2 320.6 601.7 323.4 602.2 326.2 602.7 329.0 603.2 331.8 603.7 334.6 604.2 337.4 604.7 340.2 605.2 343.1 605.7 345.9 606.2 348.7 606.7 351.5 607.2 354.3 607.7 357.1 608.2 359.9 608.7 362.7 609.2 365.5 609.7 368.3 610.2 371.1 610.7 373.9 611.2 376.8 611.7 379.6 612.2 382.4 612.7 385.2 613.2 388.0 613.7 390.8 614.2 393.6 614.7 396.4 615.2 399.2 615.7 402.0 616.2 404.8 616.7 407.7 617.2 410.5 617.7 413.3 618.2 416.1 618.7 418.9 619.2 421.7 619.7 424.5 620.2 427.3 620.7 430.1 621.2 432.9 621.7 435.7 622.2 438.5 622.7 441.4 623.2 444.2 623.7 447.0 624.2 449.8 624.7 452.6 625.2 455.4 625.7 458.2 626.2 461.0 626.7 463.8 627.2 466.6 627.7 469.4 628.2 472.2 628.7 475.1 629.2 477.9 629.7 480.7 630.2 483.5 630.7 486.3 631.2 489.1 631.7 491.9 632.2 494.6 632.7 497.4 633.2 500.1 633.7 502.9 634.2 505.6 634.7 508.2 635.2 510.9 635.7 513.5 636.2 516.0 636.7 518.6 637.2 521.1 637.7 523.5 638.2 525.9 638.7 528.3 639.2 530.6 639.7 532.9 640.2 535.1 640.7 537.2 641.2 539.3 641.7 541.3 642.2 543.2 642.7 545.1 643.2 546.9 643.7 548.6 644.2 550.2 644.7 551.8 645.2 553.2 645.7 554.6 646.2 555.9 646.7 557.1 647.2 558.2 647.7 559.3 648.2 560.2 648.7 561.1 649.2 562.0 649.7 562.7 650.2 563.4 650.7 564.1 651.2 564.7 651.7 565.2 652.2 565.7 652.7 566.1 653.2 566.5 653.7 566.8 654.2 567.1 654.7 567.3 655.2 567.5 655.7 567.7 656.2 567.9 656.7 568.0 657.2 568.1 657.7 568.2 658.2 568.2 658.7 568.2 659.2 568.3 659.7 568.3 660.2 568.3 660.7 568.3 661.2 568.3 661.7 568.3 662.2 568.3 662.7 568.3 663.2 568.3 663.7 568.3 664.2 568.3 664.7 568.3 665.2 568.3 665.7 568.3 666.2 568.3 666.7 568.3 667.2 568.3 667.7 568.3 668.2 568.3 668.7 568.3 669.2 568.3 669.7 568.3 670.2 568.3 670.7 568.3 671.2 568.3 671.7 568.3 672.2 568.3 672.7 568.3 673.2 568.3 673.7 568.3 674.2 568.3 674.7 568.3 675.2 568.3 675.7 568.3 676.2 568.3 676.7 568.3 677.2 568.3 677.7 568.3 678.2 568.3 678.7 568.3 679.2 568.3 679.7 568.3 680.2 568.3 680.7 568.3 681.2 568.3 681.7 568.3 682.2 568.3 682.7 568.3 683.2 568.3 683.7 568.3 684.2 568.3 684.7 568.3 685.2 568.3 685.7 568.3 686.2 568.3 686.7 568.3 687.2 568.3 687.7 568.3 688.2 568.3 688.7 568.3 689.2 568.3 689.7 568.3 690.2 568.3 690.7 568.3 691.2 568.3 691.7 568.3 692.2 568.3 692.7 568.3 693.2 568.3 693.7 568.3 694.2 568.3 694.7 568.3 695.2 568.3 695.7 568.3 696.2 568.3 696.7 568.3 697.2 568.3 697.7 568.3 698.2 568.3 698.7 568.3 699.2 568.3 699.7 568.3 700.2 568.3 700.7 568.3 701.2 568.3 701.7 568.3 702.2 568.3 702.7 568.3 703.2 568.3 703.7 568.3 704.2 568.3 704.7 568.3 705.2 568.3 705.7 568.3 706.2 568.3 706.7 568.3 707.2 568.3 707.7 568.3 708.2 568.3 708.7 568.3 709.2 568.3 709.7 568.3 710.2 568.3 710.7 568.3 711.2 568.3 711.7 568.3 712.2 568.3 712.7 568.3 713.2 568.3 713.7 568.3 714.2 568.3 714.7 568.3 715.2 568.3 715.7 568.3 716.2 568.3 716.7 568.3 717.2 568.3 717.7 568.3 718.2 568.3 718.7 568.3 719.2 568.3 719.7 568.3 720.2 568.3 720.7 568.3 721.2 568.3 721.7 568.3 722.2 568.3 722.7 568.3 723.2 568.3 723.7 568.3 724.2 568.3 724.7 568.3 725.2 568.3 725.7 568.3 726.2 568.3 726.7 568.3 727.2 568.3 727.7 568.3 728.2 568.3 728.7 568.3 729.2 568.3 729.7 568.3 730.2 568.3 730.7 568.3 731.2 568.3 731.7 568.3 732.2 568.3 732.7 568.3 733.2 568.3 733.7 568.3 734.2 568.3 734.7 568.3 735.2 568.3 735.7 568.3 736.2 568.3 736.7 568.3 737.2 568.3 737.7 568.3 738.2 568.3 738.7 568.3 739.2 568.3 739.7 568.3 740.2 568.3 740.7 568.3 741.2 568.3 741.7 568.3 742.2 568.3 742.7 568.3 743.2 568.3 743.7 568.3 744.2 568.3 744.7 568.3 745.2 568.3 745.7 568.3 746.2 568.3 746.7 568.3 747.2 568.3 747.7 568.3 748.2 568.3 748.7 568.3 749.2 568.3 749.7 568.3 750.2 568.3 750.7 568.3 751.2 568.3 751.7 568.3 752.2 568.3 752.7 568.3 753.2 568.3 753.7 568.3 754.2 568.3 754.7 568.3 755.2 568.3 755.7 568.3 756.2 568.3 756.7 568.3 757.2 568.3 757.7 568.3 758.2 568.3 758.7 568.3 759.2 568.3 759.7 568.3 760.2 568.3 760.7 568.3 761.2 568.3 761.7 568.3 762.2 568.3 762.7 568.3 763.2 568.3 763.7 568.3 764.2 568.3 764.7 568.3 765.2 568.3 765.7 568.3 766.2 568.3 766.7 568.3 767.2 568.3 767.7 568.3 768.2 568.3 768.7 568.3 769.2 568.3 769.7 568.3 770.2 568.3 770.7 568.3 771.2 568.3 771.7 568.3 772.2 568.3 772.7 568.3 773.2 568.3 773.7 568.3 774.2 568.3 774.7 568.3 775.2 568.3 775.7 568.3 776.2 568.3 776.7 568.3 777.2 568.3 777.7 568.3 778.2 568.3 778.7 568.3 779.2 568.3 779.7 568.3 780.2 568.3 780.7 568.3 781.2 568.3 781.7 568.3 782.2 568.3 782.7 568.3 783.2 568.3 783.7 568.3 784.2 568.3 784.7 568.3 785.2 568.3 785.7 568.3 786.2 568.3 786.7 568.3 787.2 568.3 787.7 568.3 788.2 568.3 788.7 568.3 789.2 568.3 789.7 568.3 790.2 568.3 790.7 568.3 791.2 568.3 791.7 568.3 792.2 568.3 792.7 568.3 793.2 568.3 793.7 568.3 794.2 568.3 794.7 568.3 795.2 568.3 795.7 568.3 796.2 568.3 796.7 568.3 797.2 568.3 797.7 568.3 798.2 568.3 798.7 568.3 799.2 568.3 799.7 568.3 800.2 568.3 800.7 568.3 801.2 568.3 801.7 568.3 802.2 568.3 802.7 568.3 803.2 568.3 803.7 568.3 804.2 568.3 804.7 568.3 805.2 568.3 805.7 568.3 806.2 568.3 806.7 568.3 807.2 568.3 807.7 568.3 808.2 568.3 808.7 568.3 809.2 568.3 809.7 568.3 810.2 568.3 810.7 568.3 811.2 568.3 811.7 568.3 812.2 568.3 812.7 568.3 813.2 568.3 813.7 568.3 814.2 568.3 814.7 568.3 815.2 568.3 815.7 568.3 816.2 568.3 816.7 568.3 817.2 568.3 817.7 568.3 818.2 568.3 818.7 568.3 819.2 568.3 819.7 568.3 820.2 568.3 820.7 568.3 821.2 568.3 821.7 568.3 822.2 568.3 822.7 568.3 823.2 568.3 823.7 568.3 824.2 568.3 824.7 568.3 825.2 568.3 825.7 568.3 826.2 568.3 826.7 568.3 827.2 568.3 827.7 568.3 828.2 568.3 828.7 568.3 829.2 568.3 829.7 568.3 830.2 568.3 830.7 568.3 831.2 568.3 831.7 568.3 832.2 568.3 832.7 568.3 833.2 568.3 833.7 568.3 834.2 568.3 834.7 568.3 835.2 568.3 835.7 568.3 836.2 568.3 836.7 568.3 837.2 568.3 837.7 568.3 838.2 568.3 838.7 568.3 839.2 568.3 839.7 568.3 840.2 568.3 840.7 568.3 841.2 568.3 841.7 568.3 842.2 568.3 842.7 568.3 843.2 568.3 843.7 568.3 844.2 568.3 844.7 568.3 845.2 568.3 845.7 568.3 846.2 568.3 846.7 568.3 847.2 568.3 847.7 568.3 848.2 568.3 848.7 568.3 849.2 568.3 849.7 568.3 850.0 568.3 850.0 568.3" fill="none" stroke="#b80028" stroke-width="1" shape-rendering="crispEdges"/>
<path d="M376.0 393.4 425.6 393.4 427.5 391.0 430.0 377.5 433.5 364.0 437.5 326.0 440.6 292.0 443.5 252.0 445.0 236.0 447.0 226.0 449.4 218.5 451.2 219.8 452.5 216.6 455.6 217.2 457.2 213.5 458.8 216.6 460.0 215.4 462.5 217.0 465.0 216.6 466.9 218.2 468.8 216.0 471.9 214.8 474.4 217.9 476.9 216.0 478.8 217.2 483.8 213.5 486.2 216.0 488.8 214.5 490.6 216.6 493.1 217.2 496.2 219.8 498.8 228.5 500.0 240.0 502.5 261.0 504.8 292.0 507.5 317.0 510.0 339.5 513.8 359.5 517.0 370.0 520.0 377.0 521.5 376.5 568.6 376.5 571.0 382.5 574.2 400.0 576.8 420.0 580.5 456.0 585.8 507.5 591.0 543.6 593.5 552.0 594.4 564.2 596.0 562.5 598.7 565.0 600.5 563.5 602.5 565.0 604.7 561.7 606.5 564.0 608.0 563.0 609.8 565.0 612.0 563.5 613.5 565.0 615.0 562.2 617.0 565.5 618.5 562.5 621.0 566.8 622.3 563.5 623.6 561.7 625.0 566.0 626.2 566.8 627.5 562.0 628.7 560.8 630.0 566.0 631.3 559.0 632.5 564.0 633.5 568.0 634.5 556.0 635.6 554.0 637.0 557.0 638.2 555.6 639.4 531.6 640.8 528.0 644.2 495.5 646.8 478.3 649.0 456.0 650.7 448.0 651.2 428.5 652.6 420.0 655.0 416.3 656.3 403.2 657.7 401.3 660.0 401.8 661.0 397.5 662.4 393.4 850.0 393.4" fill="none" stroke="#2c9c2c" stroke-width="1" stroke-linejoin="round" shape-rendering="crispEdges"/>
<g font-family="Liberation Mono, monospace" font-size="10.9" letter-spacing="0.46" fill="#000">
<text x="370" y="571.8" text-anchor="end">0</text>
<text x="370" y="549.6" text-anchor="end">1000</text>
<text x="370" y="527.4" text-anchor="end">2000</text>
<text x="370" y="505.2" text-anchor="end">3000</text>
<text x="370" y="483.0" text-anchor="end">4000</text>
<text x="370" y="460.9" text-anchor="end">5000</text>
<text x="370" y="438.7" text-anchor="end">6000</text>
<text x="370" y="416.5" text-anchor="end">7000</text>
<text x="370" y="394.3" text-anchor="end">8000</text>
<text x="370" y="372.1" text-anchor="end">9000</text>
<text x="370" y="349.9" text-anchor="end">10000</text>
<text x="370" y="327.7" text-anchor="end">11000</text>
<text x="370" y="305.6" text-anchor="end">12000</text>
<text x="370" y="283.4" text-anchor="end">13000</text>
<text x="370" y="261.2" text-anchor="end">14000</text>
<text x="370" y="239.0" text-anchor="end">15000</text>
<text x="370" y="216.8" text-anchor="end">16000</text>
<text x="858" y="588.7">-225</text>
<text x="858" y="567.3">-200</text>
<text x="858" y="546.0">-175</text>
<text x="858" y="524.6">-150</text>
<text x="858" y="503.3">-125</text>
<text x="858" y="481.9">-100</text>
<text x="858" y="460.6">-75</text>
<text x="858" y="439.2">-50</text>
<text x="858" y="417.9">-25</text>
<text x="858" y="396.5">0</text>
<text x="858" y="375.1">25</text>
<text x="858" y="353.8">50</text>
<text x="858" y="332.4">75</text>
<text x="858" y="311.1">100</text>
<text x="858" y="289.7">125</text>
<text x="858" y="268.4">150</text>
<text x="858" y="247.0">175</text>
<text x="858" y="225.7">200</text>
<text x="858" y="204.3">225</text>
<text x="376.5" y="603.5" text-anchor="middle">0.0</text>
<text x="455.5" y="603.5" text-anchor="middle">0.5</text>
<text x="534.5" y="603.5" text-anchor="middle">1.0</text>
<text x="613.5" y="603.5" text-anchor="middle">1.5</text>
<text x="692.5" y="603.5" text-anchor="middle">2.0</text>
<text x="771.5" y="603.5" text-anchor="middle">2.5</text>
<text x="850.5" y="603.5" text-anchor="middle">3.0</text>
</g></svg>
</div>
</body></html>
